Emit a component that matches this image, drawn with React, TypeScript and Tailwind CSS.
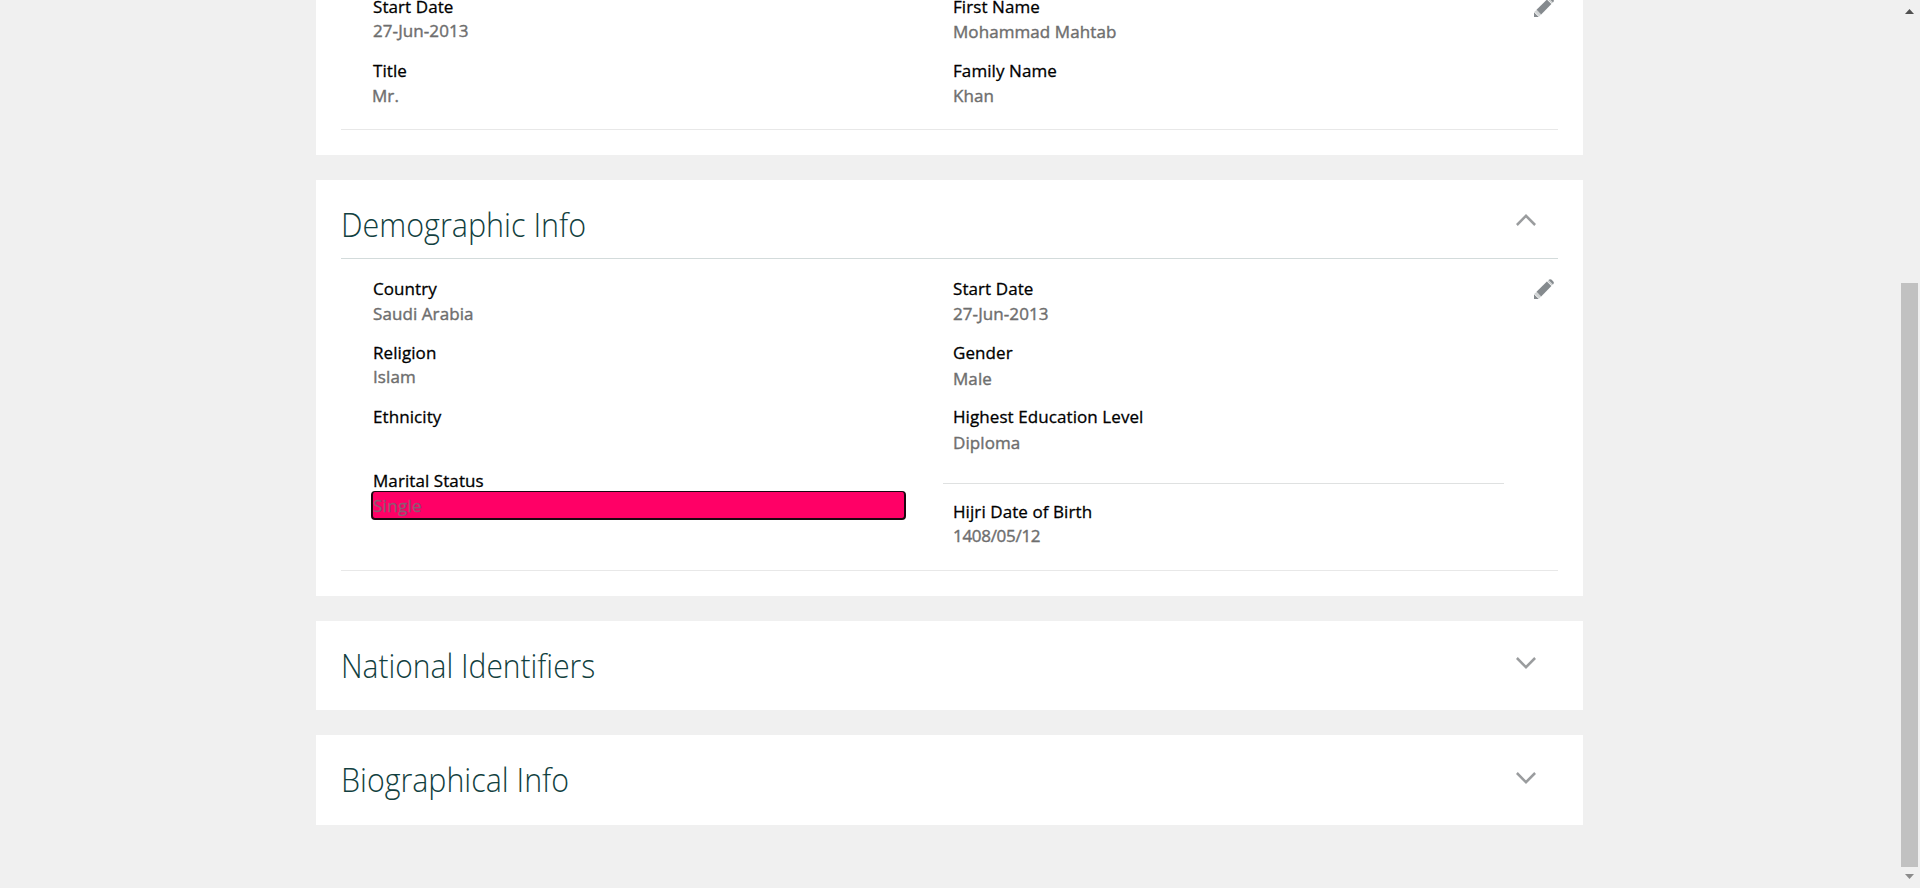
import type { ReactNode } from "react";

const sans = "font-['Open_Sans','Noto_Sans',sans-serif]";

function Pencil({ className = "" }: { className?: string }) {
  return (
    <svg width="20" height="20" viewBox="0 0 20 20" className={`shrink-0 ${className}`}>
      <path d="M0 20V15.2L4.8 20z" fill="#858a8e" />
      <path d="M0.4 14.8L2.6 12.9L7.1 17.4L5.2 19.6z" fill="#d0d3d4" />
      <path d="M2.5 12.8L12.9 2.6L17.4 7.1L7.2 17.5z" fill="#858a8e" />
      <path d="M13.4 2.2L14.4 1.2L18.8 5.6L17.8 6.6z" fill="#c9cccd" />
      <path d="M14.5 1Q16.2-.6 17.7 .8L19.3 2.4Q20.6 3.9 19 5.5z" fill="#858a8e" />
    </svg>
  );
}

function Chevron({ up = false, className = "" }: { up?: boolean; className?: string }) {
  return (
    <svg width="20" height="12" viewBox="0 0 20 12" className={`shrink-0 ${className}`} fill="none" stroke="#9a9c9e" strokeWidth="2.5">
      <path d={up ? "M.9 11L10 1.8L19.1 11" : "M.9 1L10 10.2L19.1 1"} />
    </svg>
  );
}

const fieldText = "whitespace-nowrap text-[17px] leading-6 font-medium tracking-[0.08px] [-webkit-text-stroke:0.3px]";

function Field({ label, value, gap = "mt-px" }: { label: string; value?: string; gap?: string }) {
  return (
    <div className={`h-16 ${fieldText}`}>
      <div className="text-black">{label}</div>
      {value && <div className={`text-[#6e6e6e] [-webkit-text-stroke:0.4px] ${gap}`}>{value}</div>}
    </div>
  );
}

function Card({ children, className = "" }: { children: ReactNode; className?: string }) {
  return <section className={`w-[1267px] shrink-0 bg-white px-[25px] ${className}`}>{children}</section>;
}

function Heading({ children, scale = "scale-x-[0.944]" }: { children: ReactNode; scale?: string }) {
  return (
    <h2 className={`origin-left text-[32.3px] leading-[44px] font-light whitespace-nowrap text-[#123f40] ${scale}`}>
      {children}
    </h2>
  );
}

export default function App() {
  return (
    <div className={`flex h-[888px] w-full overflow-hidden bg-[#f0f0f0] ${sans}`}>
      <main className="flex min-w-0 flex-1 flex-col gap-[25px] pl-[316px]">
        <Card className="flex h-[155px] flex-col overflow-hidden">
          <div className="flex h-[130px] shrink-0 border-b border-[#e8e8e8] pl-8">
            <div className="-mt-[5px] w-[580px]">
              <Field label="Start Date" value="27-Jun-2013" gap="mt-0" />
              <Field label="Title" value="Mr." gap="mt-px -ml-px" />
            </div>
            <div className="-mt-[5px] flex-1">
              <Field label="First Name" value="Mohammad Mahtab" />
              <Field label="Family Name" value="Khan" />
            </div>
            <Pencil className="-mt-[3px] mr-1" />
          </div>
        </Card>

        <Card className="h-[416px]">
          <header className="flex h-[79px] items-start justify-between border-b border-[#d3dbdb] pt-[22px] pr-[22px]">
            <Heading>Demographic Info</Heading>
            <Chevron up className="mt-3" />
          </header>
          <div className="flex h-[312px] border-b border-[#e8e8e8] pl-8">
            <div className="w-[570px] pt-[18px]">
              <Field label="Country" value="Saudi Arabia" />
              <Field label="Religion" value="Islam" gap="mt-0" />
              <Field label="Ethnicity" />
              <div className={fieldText}>
                <div className="text-black">Marital Status</div>
                <div className="-mt-[2px] -ml-[2px] h-[29px] w-[535px] rounded-[4px] border-2 border-t border-[#1c0710] bg-[#ff0066] leading-[27px] tracking-[0.3px] text-[#8d5a72]">
                  Single
                </div>
              </div>
            </div>
            <div className="w-[561px] pt-[18px]">
              <div className="h-[207px] border-b border-[#dfe1e1] pl-[10px]">
                <Field label="Start Date" value="27-Jun-2013" />
                <Field label="Gender" value="Male" gap="mt-[2px]" />
                <Field label="Highest Education Level" value="Diploma" gap="mt-[2px]" />
              </div>
              <div className="pt-4 pl-[10px]">
                <Field label="Hijri Date of Birth" value="1408/05/12" gap="mt-0 tracking-[-0.3px]" />
              </div>
            </div>
            <div className="flex flex-1 justify-end pt-5 pr-1">
              <Pencil />
            </div>
          </div>
        </Card>

        <Card className="flex h-[89px] items-start justify-between pt-[22px]">
          <Heading scale="scale-x-[0.928]">National Identifiers</Heading>
          <Chevron className="mt-[14px] mr-[22px]" />
        </Card>

        <Card className="flex h-[90px] items-start justify-between pt-[22px]">
          <Heading scale="scale-x-[0.94]">Biographical Info</Heading>
          <Chevron className="mt-[15px] mr-[22px]" />
        </Card>
      </main>

      <aside className="flex w-[19px] shrink-0 flex-col pt-[9px]">
        <svg width="9" height="5" viewBox="0 0 9 5" className="ml-1 shrink-0">
          <path d="M0 5L4.5 0L9 5z" fill="#505050" />
        </svg>
        <div className="mt-[269px] h-[584px] w-[17px] shrink-0 bg-[#c1c1c1]" />
        <svg width="9" height="5" viewBox="0 0 9 5" className="mt-[7px] ml-1 shrink-0">
          <path d="M0 0H9L4.5 5z" fill="#8b8b8b" />
        </svg>
      </aside>
    </div>
  );
}
